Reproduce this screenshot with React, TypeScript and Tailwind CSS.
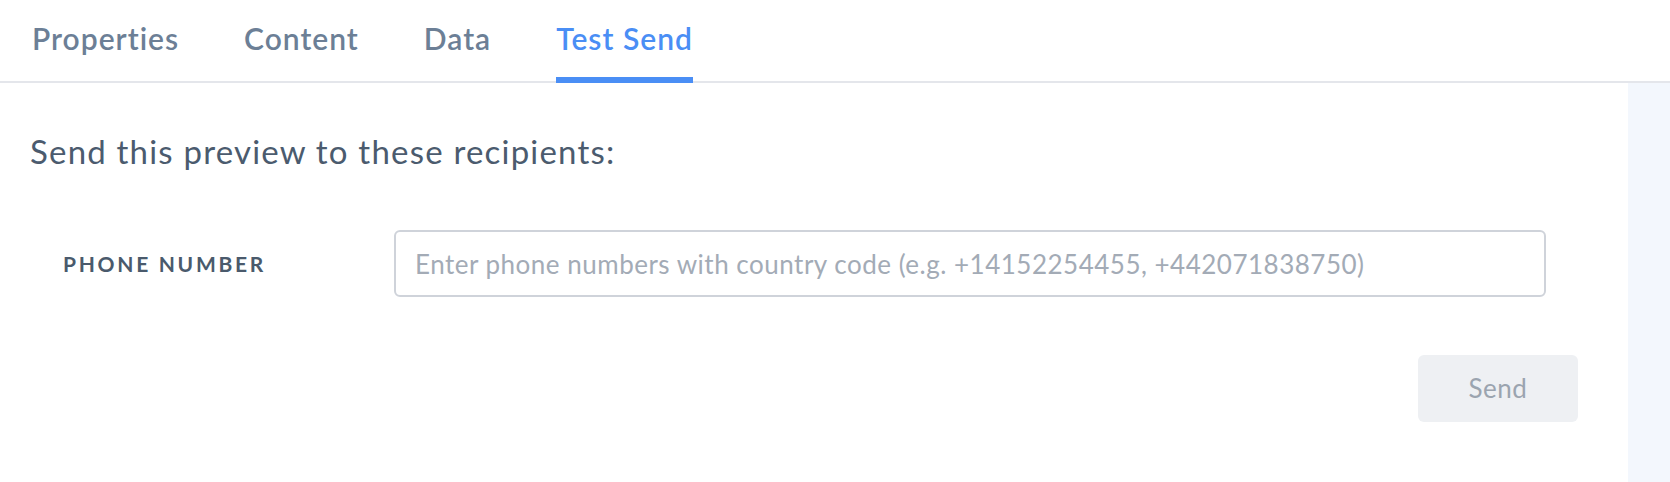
export default function App() {
  const tabs = ['Properties', 'Content', 'Data', 'Test Send'];
  const active = 'Test Send';

  return (
    <div className="w-[1670px] h-[482px] bg-white flex flex-col font-['Lato','Open_Sans',sans-serif] overflow-hidden">
      {/* Tabs */}
      <div className="h-[83px] shrink-0 border-b-2 border-[#e4e6eb] flex pl-[32px] gap-[65px]">
        {tabs.map((t) => (
          <div
            key={t}
            className={
              t === active
                ? 'relative flex items-center pb-[4px] text-[30px] font-semibold tracking-[1px] text-[#4a8ef5]'
                : 'relative flex items-center pb-[4px] text-[30px] font-semibold tracking-[1px] text-[#6c7f96]'
            }
          >
            {t}
            {t === active && (
              <span className="absolute left-0 right-0 bottom-[-2px] h-[6px] bg-[#4a8ef5]" />
            )}
          </div>
        ))}
      </div>

      <div className="flex flex-1">
        {/* Main content */}
        <div className="flex-1 pl-[30px] pr-[50px] pt-[48px]">
          <h2 className="text-[33px] font-normal tracking-[1.2px] text-[#4b5b6e] leading-[40px]">
            Send this preview to these recipients:
          </h2>

          <div className="flex items-center mt-[59px] pr-[32px]">
            <label className="w-[364px] pl-[33px] text-[21px] font-bold tracking-[2.7px] text-[#4a5a6c]">
              PHONE NUMBER
            </label>
            <input
              className="flex-1 h-[67px] rounded-[6px] border-2 border-[#cfd3da] px-[19px] text-[26px] tracking-[0.5px] text-[#4b5b6e] placeholder:text-[#a3abb6] outline-none"
              placeholder="Enter phone numbers with country code (e.g. +14152254455, +442071838750)"
            />
          </div>

          <div className="flex justify-end mt-[58px]">
            <button className="w-[160px] h-[67px] rounded-[6px] bg-[#eef0f3] text-[26px] tracking-[0.5px] text-[#9ba4af]">
              Send
            </button>
          </div>
        </div>

        {/* Side panel */}
        <div className="w-[42px] bg-[#f3f7fd]" />
      </div>
    </div>
  );
}
